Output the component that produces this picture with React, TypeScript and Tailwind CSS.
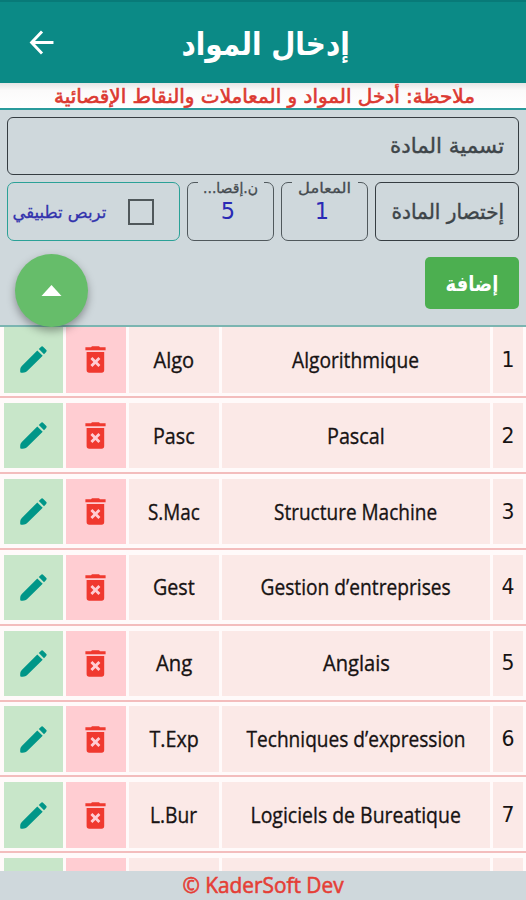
import { useLayoutEffect, useRef, useState, type ReactNode } from "react";

const latin = "font-['Open_Sans','Noto_Sans',sans-serif]";
const arabic = "font-['DejaVu_Sans',sans-serif]";
const cellText = "text-[22.5px] leading-[30px] text-[#171313] [-webkit-text-stroke:0.35px_#171313]";

/** One line of text, condensed horizontally to a given width. */
function Fit({ width, className = "", children }: { width: number; className?: string; children: ReactNode }) {
  const ref = useRef<HTMLSpanElement>(null);
  const [scale, setScale] = useState(1);
  useLayoutEffect(() => {
    const measure = () => {
      if (ref.current) setScale(width / ref.current.offsetWidth);
    };
    measure();
    document.fonts?.ready.then(measure);
  }, [width]);
  return (
    <span className="flex shrink-0 justify-center" style={{ width }}>
      <span ref={ref} className={`inline-block shrink-0 whitespace-nowrap ${className}`} style={{ transform: `scaleX(${scale})` }}>
        {children}
      </span>
    </span>
  );
}

const rows = [
  { name: "Algorithmique", nameW: 127, short: "Algo", shortW: 41 },
  { name: "Pascal", nameW: 58, short: "Pasc", shortW: 42 },
  { name: "Structure Machine", nameW: 163, short: "S.Mac", shortW: 52 },
  { name: "Gestion d’entreprises", nameW: 190, short: "Gest", shortW: 42 },
  { name: "Anglais", nameW: 67, short: "Ang", shortW: 36 },
  { name: "Techniques d’expression", nameW: 219, short: "T.Exp", shortW: 49 },
  { name: "Logiciels de Bureatique", nameW: 210, short: "L.Bur", shortW: 47 },
];

function Pencil() {
  return (
    <svg viewBox="0 0 27 27" className="mr-px size-[27px] fill-[#009688]">
      <path d="M17.3 4.4 22.7 9.8 7.2 25.1C6 26.3 4.6 26.8 2.8 26.8H1.2Q.2 26.8.2 25.8V24.2C.2 22.4.7 21.2 1.8 20zM18.8 3 20.9.9Q22.1 -.2 23.3.9L26.1 3.7Q27.2 4.8 26.1 6L24 8.2z" />
    </svg>
  );
}

function Trash() {
  return (
    <svg viewBox="0 0 21 27" className="mr-px h-[27px] w-[21px] fill-[#f0392f]">
      <path d="M6 1.2 7 0.2H14L15 1.2H20.6V4.2H.4V1.2z" />
      <path
        fillRule="evenodd"
        d="M1.6 6H19.2V24Q19.2 26.8 16.6 26.8H4.2Q1.6 26.8 1.6 24zM10.4 14.1 7.4 11.1 5.4 13.1 8.4 16.1 5.4 19.1 7.4 21.1 10.4 18.1 13.4 21.1 15.4 19.1 12.4 16.1 15.4 13.1 13.4 11.1z"
      />
    </svg>
  );
}

function SmallField({ label, labelW, value }: { label: string; labelW: number; value: string }) {
  return (
    <div className="flex h-[59px] w-[87px] flex-col items-center rounded-[7px] border-[1.5px] border-[#50585c]">
      <span dir="rtl" className="-mt-[2px] flex h-[14px] w-[66px] items-center justify-center bg-[#cfd8dc] text-[#454b50]">
        <Fit width={labelW} className={`${arabic} text-[14.5px] leading-[14px] [-webkit-text-stroke:0.3px_#454b50]`}>{label}</Fit>
      </span>
      <span className="mr-[5px] mt-[3px] flex text-[#2929b5]">
        <Fit width={14} className={`${arabic} text-[22.5px] leading-[26px]`}>{value}</Fit>
      </span>
    </div>
  );
}

export default function App() {
  return (
    <div className="flex h-[900px] w-[526px] flex-col overflow-hidden bg-[#fffafa]">
      <header className="flex h-[83px] shrink-0 items-center border-t-2 border-[#087a78] bg-[#0b8a86] pl-[29px] text-white">
        <svg viewBox="0 0 24 24" className="size-[25px] fill-none stroke-white stroke-[2.8]">
          <path d="M23.5 12H2.5M12.5 1.5 2.5 12 12.5 22.5" />
        </svg>
        <h1 dir="rtl" className="ml-[128px] flex pt-0.5">
          <Fit width={168} className={`${arabic} text-[32px] font-bold leading-[44px]`}>إدخال المواد</Fit>
        </h1>
      </header>

      <div dir="rtl" className="flex h-[25px] shrink-0 items-center bg-gradient-to-b from-[#e5e5e5] via-[#fbfafa] via-30% to-white pr-[51px] pt-0.5 text-[#dc3931]">
        <Fit width={421} className={`${arabic} text-[19.5px] leading-[23px] [-webkit-text-stroke:0.6px_#dc3931]`}>ملاحظة: أدخل المواد و المعاملات والنقاط الإقصائية</Fit>
      </div>

      <section className="relative z-10 flex h-[219px] shrink-0 flex-col border-y-2 border-t-[#299b9c] border-b-[#7bb5b1] bg-[#cfd8dc] px-[7px] pt-[7px]">
        <div dir="rtl" className="flex h-[58px] w-[512px] shrink-0 items-center rounded-[6px] border-[1.5px] border-[#363d42] pr-[14px] text-[#3e4549]">
          <Fit width={114} className={`${arabic} text-[21px] leading-[30px] [-webkit-text-stroke:0.4px_#3e4549]`}>تسمية المادة</Fit>
        </div>
        <div className="mt-[7px] flex h-[59px] w-[512px] shrink-0 justify-between">
          <div className="flex h-[59px] w-[173px] items-center rounded-[7px] border-[1.5px] border-[#2ba197] pl-[4px] text-[#3232ad]">
            <Fit width={94} className={`${arabic} text-[17px] leading-[28px] [-webkit-text-stroke:0.3px_#3232ad]`}>تربص تطبيقي</Fit>
            <span className="ml-[22px] size-[26px] border-2 border-[#50585b]" />
          </div>
          <SmallField label="ن.إقصا..." labelW={55} value="5" />
          <SmallField label="المعامل" labelW={53} value="1" />
          <div dir="rtl" className="flex h-[59px] w-[144px] items-center rounded-[6px] border-[1.5px] border-[#363d42] pr-[14px] text-[#3e4549]">
            <Fit width={113} className={`${arabic} text-[21px] leading-[30px] [-webkit-text-stroke:0.4px_#3e4549]`}>إختصار المادة</Fit>
          </div>
        </div>
        <div className="mt-[13px] flex h-[74px] w-[512px] shrink-0 justify-between pl-[8px]">
          <button className="flex size-[73px] items-center justify-center rounded-full bg-[#66bd6a] shadow-[0_4px_9px_rgba(0,0,0,0.35)]">
            <svg viewBox="0 0 20 11" className="h-[11px] w-[21px] fill-white"><path d="M10 0 20 11H0z" /></svg>
          </button>
          <button dir="rtl" className="mt-[3px] flex h-[52px] w-[94px] items-center justify-center rounded-[5px] bg-[#4caf50] pt-0.5 text-white">
            <Fit width={53} className={`${arabic} text-[21px] font-bold leading-[30px]`}>إضافة</Fit>
          </button>
        </div>
      </section>

      <main className="flex min-h-0 flex-1 flex-col overflow-hidden">
        {[...rows, null].map((row, i) => (
          <div key={i} className="flex h-[75.9px] shrink-0 flex-col">
            <div className="flex h-[65.5px] shrink-0 gap-[3px] pl-1">
              <div className="flex w-[59px] items-center justify-center bg-[#c8e6c9]">{row && <Pencil />}</div>
              <div className="flex w-[60px] items-center justify-center bg-[#ffcdd2]">{row && <Trash />}</div>
              <div className="flex w-[90px] items-center justify-center bg-[#fbe9e7]">
                {row && <Fit width={row.shortW} className={`${latin} ${cellText}`}>{row.short}</Fit>}
              </div>
              <div className="flex w-[268px] items-center justify-center bg-[#fbe9e7]">
                {row && <Fit width={row.nameW} className={`${latin} ${cellText}`}>{row.name}</Fit>}
              </div>
              <div className="flex w-[30px] items-center justify-center bg-[#fbe9e7]">
                {row && <Fit width={13} className={`${arabic} text-[22px] leading-[30px] text-[#171313]`}>{i + 1}</Fit>}
              </div>
            </div>
            <div className="mt-[3.5px] h-[2px] shrink-0 bg-[#f3bdbd]" />
          </div>
        ))}
      </main>

      <footer className="flex h-[29px] shrink-0 items-start justify-center bg-[#cfd8dc] text-[#e53e36]">
        <Fit width={161} className={`${latin} -mt-px text-[22px] leading-[28px] [-webkit-text-stroke:0.6px_#e53e36]`}>© KaderSoft Dev</Fit>
      </footer>
    </div>
  );
}
